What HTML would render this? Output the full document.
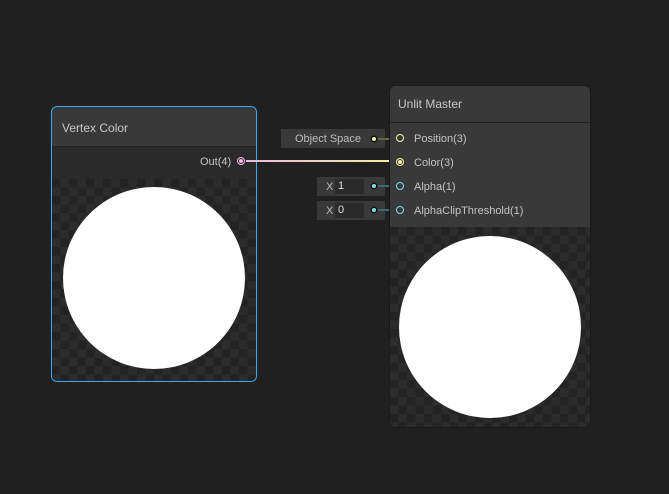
<!DOCTYPE html><html><head><style>
body{margin:0;width:669px;height:494px;background:#202020;position:relative;overflow:hidden;font-family:"Liberation Sans",sans-serif;font-size:11px;color:#c4c4c4}
.a{position:absolute}
.chk{background-color:#232323;background-image:linear-gradient(45deg,#2c2c2c 25%,transparent 25%,transparent 75%,#2c2c2c 75%),linear-gradient(45deg,#2c2c2c 25%,transparent 25%,transparent 75%,#2c2c2c 75%);background-size:17px 17px;background-position:0 0,8.5px 8.5px}
.circ{position:absolute;background:#fff;border-radius:50%}
.port{position:absolute;width:6px;height:6px;border-radius:50%;border:1.5px solid}
</style></head><body>
<!-- Node 1 -->
<div class="a" style="left:51px;top:106px;width:204px;height:274px;border:1px solid #3fa9f5;border-radius:6px;background:#2a2a2a;overflow:hidden">
 <div class="a" style="left:0;top:0;width:204px;height:39px;background:#393939;border-bottom:1px solid #232323"></div>
 <div class="a" style="left:10px;top:14px;font-size:12px;color:#c8c8c8">Vertex Color</div>
 <div class="a" style="left:148px;top:49px;color:#c4c4c4">Out(4)</div>
 <div class="a chk" style="left:0;top:72px;width:204px;height:202px"></div>
 <div class="circ" style="left:11px;top:80px;width:182px;height:182px"></div>
</div>
<div class="port" style="left:237px;top:157px;border-color:#f0b8e0"><div style="position:absolute;left:1px;top:1px;width:4px;height:4px;border-radius:50%;background:#f0b8e0"></div></div>
<!-- wire -->
<div class="a" style="left:246px;top:160px;width:150px;height:2px;background:linear-gradient(90deg,#f0b8e0,#f0f0a0)"></div>
<!-- inputs -->
<div class="a" style="left:281px;top:129px;width:104px;height:19px;background:#393939"></div>
<div class="a" style="left:295px;top:133px;color:#bdbdbd">Object Space</div>
<div class="a" style="left:372px;top:137px;width:4px;height:4px;border-radius:50%;background:#f0f0a0;box-shadow:0 0 0 1.5px #111"></div>
<div class="a" style="left:378px;top:138px;width:14px;height:2px;background:#6a6a40"></div>
<div class="a" style="left:317px;top:177px;width:68px;height:19px;background:#393939"></div>
<div class="a" style="left:326px;top:181px;color:#bdbdbd">X</div>
<div class="a" style="left:335px;top:179px;width:29px;height:15px;background:#2a2a2a;color:#ddd;box-sizing:border-box;padding:1px 3px">1</div>
<div class="a" style="left:372px;top:184px;width:4px;height:4px;border-radius:50%;background:#7de0ea;box-shadow:0 0 0 1.5px #111"></div>
<div class="a" style="left:378px;top:185px;width:14px;height:2px;background:#3c6a70"></div>
<div class="a" style="left:317px;top:201px;width:68px;height:19px;background:#393939"></div>
<div class="a" style="left:326px;top:205px;color:#bdbdbd">X</div>
<div class="a" style="left:335px;top:203px;width:29px;height:15px;background:#2a2a2a;color:#ddd;box-sizing:border-box;padding:1px 3px">0</div>
<div class="a" style="left:372px;top:208px;width:4px;height:4px;border-radius:50%;background:#7de0ea;box-shadow:0 0 0 1.5px #111"></div>
<div class="a" style="left:378px;top:209px;width:14px;height:2px;background:#3c6a70"></div>
<!-- Node 2 -->
<div class="a" style="left:389px;top:85px;width:200px;height:341px;border:1px solid #191919;border-radius:6px;background:#393939;overflow:hidden">
 <div class="a" style="left:0;top:36px;width:200px;height:1px;background:#242424"></div>
 <div class="a" style="left:8px;top:11px;font-size:12px;color:#c8c8c8">Unlit Master</div>
 <div class="a" style="left:24px;top:47px">Position(3)</div>
 <div class="a" style="left:24px;top:71px">Color(3)</div>
 <div class="a" style="left:24px;top:95px">Alpha(1)</div>
 <div class="a" style="left:24px;top:119px">AlphaClipThreshold(1)</div>
 <div class="a chk" style="left:0;top:141px;width:200px;height:200px"></div>
 <div class="circ" style="left:9px;top:150px;width:182px;height:182px"></div>
</div>
<div class="port" style="left:396px;top:134px;border-color:#f0f0a0"></div>
<div class="port" style="left:396px;top:158px;border-color:#f0f0a0"><div style="position:absolute;left:1px;top:1px;width:4px;height:4px;border-radius:50%;background:#f0f0a0"></div></div>
<div class="port" style="left:396px;top:182px;border-color:#7de0ea"></div>
<div class="port" style="left:396px;top:206px;border-color:#7de0ea"></div>
</body></html>
